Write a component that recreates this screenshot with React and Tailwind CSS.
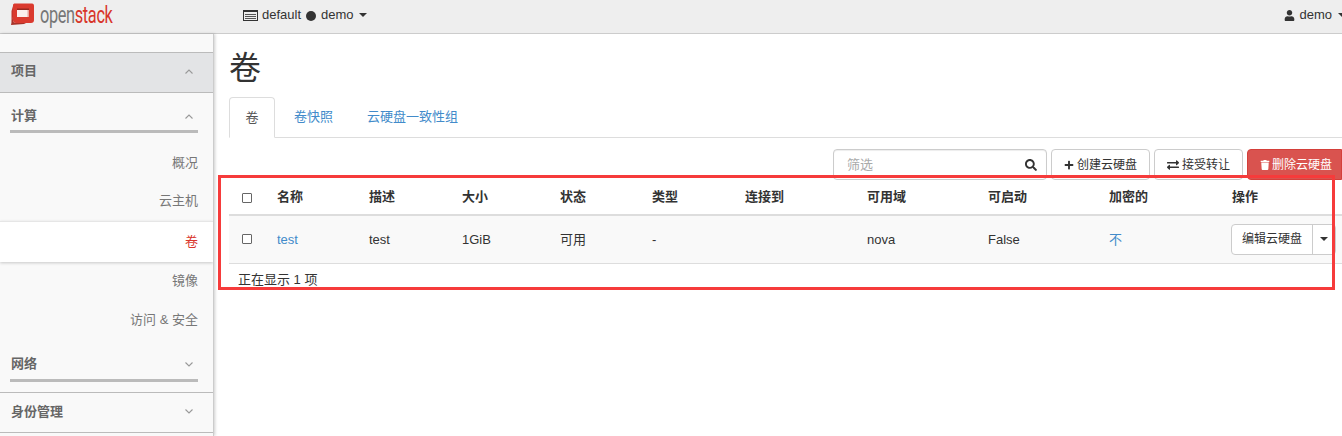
import { FaPlus, FaExchangeAlt, FaSearch, FaTrash, FaUser } from 'react-icons/fa'

const sans = 'font-["Liberation_Sans","Noto_Sans_CJK_SC",sans-serif]'

function Chevron({ up }) {
  return (
    <svg width="8" height="5" viewBox="0 0 8 5" fill="none" stroke="#999" strokeWidth="1.1" className="mr-[4px]">
      <path d={up ? 'M0.500 4.500l3.500-3.500 3.500 3.500' : 'M0.500 0.500l3.500 3.500 3.500-3.500'} />
    </svg>
  )
}

function Caret() {
  return <span className="inline-block w-0 h-0 border-x-4 border-x-transparent border-t-4 border-t-[#333]" />
}

function Logo() {
  return (
    <svg width="25" height="23" viewBox="0 0 25 23" className="ml-[10px] -mt-[4px] shrink-0">
      <path d="M5 0.500H22C23.500 0.500 24 1.500 24 3V17C24 19 23 20 21 20H6C4 20 3 19 3 17V2C3 1 4 0.500 5 0.500Z" fill="#da3a2e" />
      <path d="M3 12L1 22L14 21L16 20H6C4 20 3 19 3 17Z" fill="#a83228" />
      <path d="M1.500 8L3 3V14L1.500 20Z" fill="#c4352b" />
      <rect x="7" y="7" width="12" height="7" fill="#fbeeec" />
      <rect x="7" y="5.500" width="12" height="1.500" fill="#97281f" />
      <rect x="17.500" y="7" width="1.500" height="7" fill="#e8a49d" />
    </svg>
  )
}

function SubItem({ label, className = '' }) {
  return <div className={`text-right pr-[15px] text-[13px] leading-[18px] h-[18px] text-[#777] ${className}`}>{label}</div>
}

function Sidebar() {
  return (
    <aside className="w-[214px] shrink-0 h-[402px] overflow-hidden bg-[#f9f9f9] border-r border-[#ccc] shadow-[1px_0_3px_rgba(0,0,0,0.2)] text-[13px]">
      <div className="h-[18px]" />
      <div className="h-[41px] flex items-center justify-between pl-[11px] pr-[16px] pb-[3px] bg-[#e3e4e6] border-y border-[#bbb] font-bold text-[#666]">
        项目
        <Chevron up />
      </div>
      <div className="pt-[11px] flex justify-between items-center pr-[16px] pl-[11px] font-bold text-[#666] h-[37px] pb-[2px]">
        计算
        <Chevron up />
      </div>
      <div className="ml-[10px] mr-[15px] h-[3px] bg-[#bbb]" />
      <SubItem label="概况" className="mt-[21px]" />
      <SubItem label="云主机" className="mt-[20px]" />
      <div className="mt-[11px] h-[41px] leading-[39px] bg-white border-t border-[#e6e6e6] shadow-[0_1px_3px_rgba(0,0,0,0.2)] text-right pr-[15px] text-[#d9352b]">
        卷
      </div>
      <SubItem label="镜像" className="mt-[10px]" />
      <SubItem label="访问 & 安全" className="mt-[21px]" />
      <div className="mt-[26px] h-[18px] flex items-center justify-between pl-[11px] pr-[16px] font-bold text-[#666]">
        网络
        <Chevron />
      </div>
      <div className="mt-[6px] ml-[10px] mr-[15px] h-[3px] bg-[#bbb]" />
      <div className="mt-[10px] h-[41px] flex items-center justify-between pl-[11px] pr-[16px] pb-[2px] border-y border-[#bbb] font-bold text-[#666]">
        身份管理
        <Chevron />
      </div>
    </aside>
  )
}

function Toolbar() {
  return (
    <div className="flex justify-end items-center h-[31px] mt-[11px] text-[12px] text-[#333] gap-[4px] w-[509px] ml-auto">
      <div className="w-[214px] h-[31px] flex items-center justify-between pl-[13px] pr-[9px] border border-[#ccc] rounded-[4px] shadow-[inset_0_1px_1px_rgba(0,0,0,0.075)] text-[13px] text-[#aaa]">
        筛选
        <FaSearch size={12} className="text-[#333]" />
      </div>
      <div className="w-[99px] h-[31px] flex items-center justify-center gap-[3px] border border-[#ccc] rounded-[4px]">
        <FaPlus size={10} />
        创建云硬盘
      </div>
      <div className="w-[89px] h-[31px] flex items-center justify-center gap-[3px] border border-[#ccc] rounded-[4px]">
        <FaExchangeAlt size={12} />
        接受转让
      </div>
      <div className="w-[95px] h-[31px] shrink-0 flex items-center justify-end pr-[9px] gap-[2px] bg-[#d9534f] border border-[#d43f3a] rounded-l-[4px] text-white">
        <FaTrash size={10} />
        删除云硬盘
      </div>
    </div>
  )
}

const headers = ['名称', '描述', '大小', '状态', '类型', '连接到', '可用域', '可启动', '加密的', '操作']

function Checkbox() {
  return <span className="block w-[10px] h-[10px] ml-[5px] rounded-[1px] border border-[#666] bg-white" />
}

function VolumesTable() {
  return (
    <table className="w-[1113px] table-fixed border-collapse text-[13px] text-[#333] -mt-[2px]">
      <colgroup>
        <col className="w-[40px]" />
        <col className="w-[92px]" />
        <col className="w-[93px]" />
        <col className="w-[98px]" />
        <col className="w-[92px]" />
        <col className="w-[93px]" />
        <col className="w-[122px]" />
        <col className="w-[121px]" />
        <col className="w-[121px]" />
        <col className="w-[123px]" />
      </colgroup>
      <thead>
        <tr className="h-[37px] border-b-2 border-[#ddd]">
          <th className="px-[8px] pt-[3px]"><Checkbox /></th>
          {headers.map((h) => (
            <th key={h} className="px-[8px] pt-[1px] text-left font-bold">{h}</th>
          ))}
        </tr>
      </thead>
      <tbody>
        <tr className="h-[48px] bg-[#f9f9f9] border-b border-[#ddd]">
          <td className="px-[8px]"><Checkbox /></td>
          <td className="px-[8px] text-[#428bca]">test</td>
          <td className="px-[8px]">test</td>
          <td className="px-[8px]">1GiB</td>
          <td className="px-[8px]">可用</td>
          <td className="px-[8px]">-</td>
          <td className="px-[8px]" />
          <td className="px-[8px]">nova</td>
          <td className="px-[8px]">False</td>
          <td className="px-[8px] text-[#428bca]">不</td>
          <td className="pl-[7px] pr-[6px]">
            <div className="flex h-[31px] w-[105px] bg-white border border-[#ccc] rounded-[4px] text-[12px]">
              <span className="w-[81px] shrink-0 leading-[29px] text-center border-r border-[#ccc]">编辑云硬盘</span>
              <span className="flex-1 flex items-center justify-center"><Caret /></span>
            </div>
          </td>
        </tr>
      </tbody>
    </table>
  )
}

export default function App() {
  return (
    <div className={`relative w-[1342px] h-[436px] overflow-hidden bg-white ${sans}`}>
      <nav className="h-[34px] flex items-center bg-[#eee] border-b border-[#ccc] text-[13px] text-[#333]">
        <Logo />
        <span className="ml-[5px] w-[203px] -mt-[3px] font-['Roboto',sans-serif] text-[24px] tracking-[-0.5px] origin-left scale-x-[0.68] text-[#777]">
          open<span className="text-[#d8352a]">stack</span>
        </span>
        <svg width="15" height="11" viewBox="0 0 15 11" className="shrink-0 -mt-[3px]">
          <rect x="0.500" y="0.500" width="14" height="10" fill="#eee" stroke="#333" />
          <rect x="0" y="0" width="15" height="2" fill="#333" />
          <path d="M2 4.500h11M2 6.500h11M2 8.500h11" stroke="#555" />
        </svg>
        <span className="ml-[4px] -mt-[3px]">default</span>
        <span className="ml-[5px] -mt-[2px] w-[10px] h-[10px] rounded-full bg-[#333]" />
        <span className="ml-[5px] -mt-[3px]">demo</span>
        <span className="ml-[5px] -mt-[3px] flex"><Caret /></span>
        <div className="ml-auto flex items-center gap-[4px] mr-[-4px] -mt-[3px]">
          <FaUser size={11} />
          <span className="mr-[2px]">demo</span>
          <Caret />
        </div>
      </nav>
      <div className="flex">
        <Sidebar />
        <main className="flex-1 min-w-0 pl-[15px]">
          <h1 className="mt-[16px] h-[37px] leading-[37px] text-[32px] text-[#333]">卷</h1>
          <div className="mt-[10px] h-[41px] flex border-b border-[#ddd] text-[13px] text-[#428bca]">
            <div className="w-[46px] h-[41px] flex items-center justify-center bg-white border border-[#ddd] border-b-white rounded-t-[4px] text-[#555]">卷</div>
            <div className="ml-[19px] flex items-center">卷快照</div>
            <div className="ml-[34px] flex items-center">云硬盘一致性组</div>
          </div>
          <Toolbar />
          <VolumesTable />
          <div className="mt-[7px] pl-[9px] text-[13px] leading-[18px] text-[#333]">正在显示 1 项</div>
        </main>
      </div>
      <div className="absolute left-[218px] top-[175px] w-[1117px] h-[115px] border-[3px] border-[#f63b3b]" />
    </div>
  )
}
